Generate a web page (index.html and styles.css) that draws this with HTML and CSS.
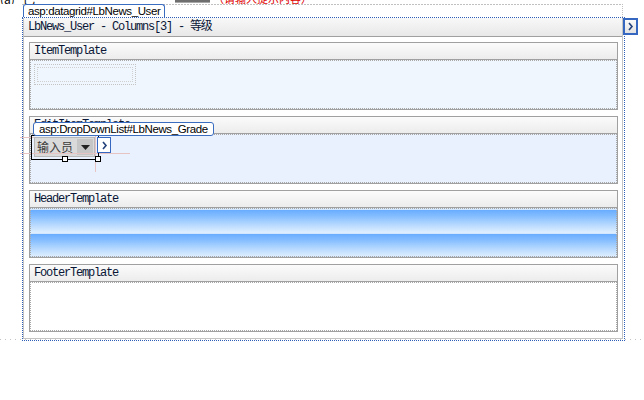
FILE: index.html
```html
<!DOCTYPE html>
<html lang="zh">

<head>
    <meta charset="UTF-8">
    <meta name="viewport" content="width=device-width, initial-scale=1.0">
    <title>LbNews_User - 模板编辑</title>
    <link rel="stylesheet" href="styles.css">
</head>

<body>
    <!-- bits of the form row above the grid, cut by the top of the view -->
    <div class="clip-row">
        <span class="clip-text">(a)&nbsp;&nbsp;&nbsp;己</span>
        <span class="clip-input"></span>
        <span class="clip-red">（请输入提示内容）</span>
    </div>

    <div class="grid-row">
        <div class="grid-frame">
            <div class="tag">asp:datagrid#LbNews_User</div>
        </div>
        <div class="grid-box">
            <div class="smart-tag">
                <svg width="7" height="9" viewBox="0 0 7 9">
                    <polyline points="2,1 5,4.5 2,8" fill="none" stroke="#22407a" stroke-width="1.6" />
                </svg>
            </div>
            <div class="panel">
                <div class="panel-title">LbNews_User - Columns[3] - 等级</div>

                <div class="tpl">
                    <div class="tpl-head">ItemTemplate</div>
                    <div class="tpl-body item">
                        <div class="tpl-inner">
                            <div class="label-slot">
                                <div></div>
                            </div>
                        </div>
                    </div>
                </div>

                <div class="tpl edit">
                    <div class="tpl-head">EditItemTemplate</div>
                    <div class="tpl-body">
                        <div class="tpl-inner">
                            <div class="dropdown">
                                <span class="dropdown-text">输入员</span>
                                <span class="dropdown-btn">
                                    <svg width="9" height="5" viewBox="0 0 9 5">
                                        <polygon points="0,0 9,0 4.5,5" fill="#222" />
                                    </svg>
                                </span>
                            </div>
                        </div>
                    </div>
                    <!-- designer selection of the dropdown -->
                    <div class="guide guide-h1"></div>
                    <div class="guide guide-h2"></div>
                    <div class="guide guide-v"></div>
                    <div class="selection"></div>
                    <div class="handle handle-1"></div>
                    <div class="handle handle-2"></div>
                    <div class="tag tag-ctrl">asp:DropDownList#LbNews_Grade</div>
                    <div class="smart-tag smart-tag-ctrl">
                        <svg width="7" height="9" viewBox="0 0 7 9">
                            <polyline points="2,1 5,4.5 2,8" fill="none" stroke="#22407a" stroke-width="1.6" />
                        </svg>
                    </div>
                </div>

                <div class="tpl">
                    <div class="tpl-head">HeaderTemplate</div>
                    <div class="tpl-body">
                        <div class="tpl-inner stripes"></div>
                    </div>
                </div>

                <div class="tpl">
                    <div class="tpl-head">FooterTemplate</div>
                    <div class="tpl-body footer">
                        <div class="tpl-inner"></div>
                    </div>
                </div>
            </div>
        </div>
    </div>
</body>

</html>
```

FILE: styles.css
```css
body {
    margin: 0;
    background-color: #fff;
    font-family: "Liberation Sans", "Noto Sans CJK SC", sans-serif;
}

/* top edge: what is left of the row above */
.clip-row {
    height: 4px;
    overflow: hidden;
    display: flex;
    align-items: flex-end;
    font-size: 12px;
    line-height: 11px;
}

.clip-text {
    color: #000;
    font-family: "Noto Sans CJK SC", sans-serif;
    width: 175px;
    flex-shrink: 0;
}

.clip-input {
    align-self: flex-start;
    width: 35px;
    height: 2px;
    background-color: #6e6e6e;
    border-bottom: 1px solid #a8a8a8;
    flex-shrink: 0;
}

.clip-red {
    color: #e00000;
    font-family: "Noto Sans CJK SC", sans-serif;
    font-size: 11px;
    margin-left: 3px;
    white-space: nowrap;
}

/* grid host */
.grid-row {
    padding-left: 22px;
    background-image: repeating-linear-gradient(to right, #c4c4c4 0, #c4c4c4 1px, transparent 1px, transparent 5px);
    background-size: 100% 1px;
    background-position: 0 calc(100% - 1px);
    background-repeat: no-repeat;
}

.grid-frame {
    display: flex;
    align-items: flex-start;
    width: 601px;
    height: 13px;
    box-sizing: border-box;
    border-right: 1px dotted #c0c0c0;
    background-image: repeating-linear-gradient(to right, #c0c0c0 0, #c0c0c0 2px, transparent 2px, transparent 3px);
    background-size: 100% 1px;
    background-repeat: no-repeat;
}

.tag {
    height: 13px;
    box-sizing: border-box;
    padding: 0 4px 0 4px;
    background-color: #fff;
    border: 1px solid #3a6cc0;
    border-bottom: none;
    border-radius: 3px 3px 0 0;
    margin-left: 1px;
    font-size: 11.5px;
    letter-spacing: -0.4px;
    line-height: 12px;
    color: #000;
    white-space: nowrap;
}

.grid-box {
    position: relative;
    width: 603px;
    box-sizing: border-box;
    border: 1px dotted #2e5db8;
    padding: 0 1px 1px 0;
}

.smart-tag {
    position: absolute;
    left: 600px;
    top: 0;
    width: 15px;
    height: 17px;
    box-sizing: border-box;
    border: 2px solid #3567c0;
    background: linear-gradient(#fafafa, #e2e2e2);
    display: flex;
    align-items: center;
    justify-content: center;
}

.panel {
    border: 1px solid #c4c4c4;
    border-top: none;
    padding-bottom: 6px;
    background-color: #fff;
}

.panel-title {
    height: 18px;
    line-height: 18px;
    border-bottom: 1px solid #a0a0a0;
    background: linear-gradient(#f8f8f8, #e8e8e8);
    padding-left: 4px;
    font-family: "Liberation Mono", "Noto Sans CJK SC", monospace;
    font-size: 12px;
    letter-spacing: -1.2px;
    color: #0a1636;
}

/* template sections */
.tpl {
    position: relative;
    margin: 6px 4px 0 5px;
}

.panel-title + .tpl {
    margin-top: 5px;
}

.tpl-head {
    height: 18px;
    box-sizing: border-box;
    border: 1px solid #a0a0a0;
    line-height: 16px;
    padding-left: 4px;
    background: linear-gradient(#fbfbfb, #ececec);
    font-family: "Liberation Mono", monospace;
    font-size: 12px;
    letter-spacing: -1.2px;
    color: #0a1636;
}

.tpl-body {
    height: 50px;
    box-sizing: border-box;
    border: 1px solid #a0a0a0;
    border-top: none;
    background-color: #e8f1fd;
}

.tpl-body.item {
    background-color: #f0f6fe;
}

.tpl-body.footer {
    background-color: #fff;
}

.tpl-inner {
    height: 100%;
    box-sizing: border-box;
    border: 1px dotted #a8a8a8;
    padding: 2px 0 0 3px;
}

.label-slot {
    width: 102px;
    height: 21px;
    box-sizing: border-box;
    margin-top: 1px;
    border: 1px dotted #c4c4c4;
    padding: 2px;
}

.label-slot div {
    height: 100%;
    box-sizing: border-box;
    border: 1px dotted #d0d0d0;
}

.stripes {
    padding: 0;
    background: repeating-linear-gradient(#d2e7ff 0, #d2e7ff 1px, #68acff 1px, #84bdff 7px, #b8daff 16px, #dcedff 23px, #dcedff 24px);
}

/* dropdown control */
.dropdown {
    display: inline-flex;
    align-items: center;
    width: 61px;
    height: 20px;
    box-sizing: border-box;
    border: 1px solid #b8b8b8;
    background-color: #dadada;
}

.dropdown-text {
    flex: 1;
    padding-left: 2px;
    font-family: "Noto Sans CJK SC", sans-serif;
    font-size: 12px;
    line-height: 16px;
    color: #3c3c3c;
}

.dropdown-btn {
    width: 16px;
    height: 16px;
    margin-right: 1px;
    background-color: #c6c6c6;
    display: flex;
    align-items: center;
    justify-content: center;
}

.selection {
    position: absolute;
    left: 2px;
    top: 19px;
    width: 68px;
    height: 25px;
    box-sizing: border-box;
    border: 1px solid #000;
}

.handle {
    position: absolute;
    top: 40px;
    width: 6px;
    height: 6px;
    box-sizing: border-box;
    border: 1px solid #000;
    background-color: #fff;
}

.handle-1 {
    left: 33px;
}

.handle-2 {
    left: 66px;
}

.guide {
    position: absolute;
    background-color: #e6c4c4;
}

.guide-h1 {
    left: -9px;
    top: 21px;
    width: 14px;
    height: 1px;
}

.guide-h2 {
    left: -9px;
    top: 37px;
    width: 110px;
    height: 1px;
}

.guide-v {
    left: 66px;
    top: 11px;
    width: 1px;
    height: 45px;
}

.tag-ctrl {
    position: absolute;
    left: 4px;
    top: 6px;
    height: 14px;
    margin: 0;
    border-bottom: 1px solid #3a6cc0;
    border-radius: 3px;
    padding: 0 5px 0 5px;
    line-height: 12px;
}

.smart-tag-ctrl {
    left: 68px;
    top: 21px;
    width: 14px;
    height: 16px;
    border-width: 1px;
    background: #fff;
}
```
